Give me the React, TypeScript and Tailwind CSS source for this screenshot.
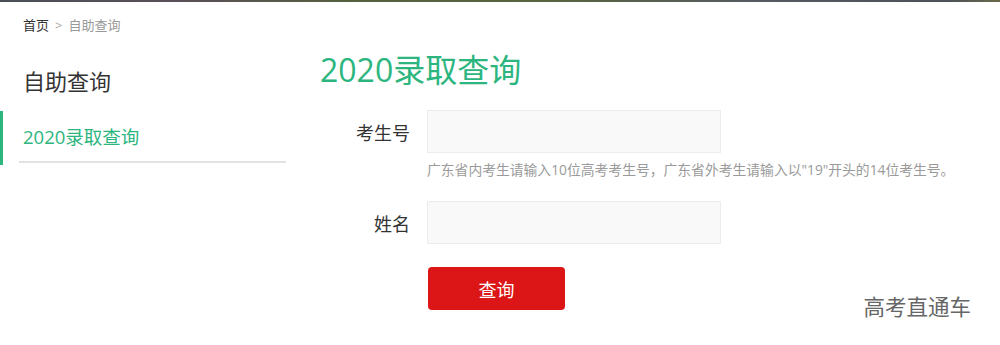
import React from "react";

const font = { fontFamily: '"Open Sans", "Noto Sans CJK SC", sans-serif' };

export default function App() {
  return (
    <div
      className="relative w-[1000px] h-[345px] overflow-hidden bg-white"
      style={font}
    >
      <div className="h-[2px] w-full bg-[linear-gradient(90deg,#4a4f56_0%,#5a5058_18%,#55603f_35%,#5a6440_55%,#555b60_75%,#4d5258_95%,#6a6a48_100%)]" />
      <div className="pt-[13px] pl-[23px] h-[33px] flex items-center text-[13px] leading-[20px]">
        <span className="text-[#333]">首页</span>
        <span className="text-[#aaa] mx-[6px]">&gt;</span>
        <span className="text-[#999]">自助查询</span>
      </div>
      <div className="flex">
        <div className="w-[286px] shrink-0">
          <div className="mt-[31px] pl-[23px] text-[22px] leading-[30px] text-[#333]">
            自助查询
          </div>
          <div className="relative mt-[15px] h-[54px]">
            <div className="absolute left-0 top-0 h-full w-[3px] bg-[#2cb57e]" />
            <div className="ml-[19px] h-[52px] border-b-2 border-[#e2e2e2] pl-[4px] pt-[2px] flex items-center text-[18.5px] text-[#2cb57e]">
              2020录取查询
            </div>
          </div>
        </div>
        <div className="pl-[34px]">
          <div className="mt-[15px] text-[32px] leading-[40px] text-[#2cb57e]">
            2020录取查询
          </div>
          <div className="mt-[20px] flex items-center">
            <div className="w-[90px] pt-[3px] text-right text-[18px] text-[#333]">考生号</div>
            <div className="ml-[17px] w-[294px] h-[43px] bg-[#f9f9f9] border border-[#ececec]" />
          </div>
          <div className="mt-[7px] ml-[107px] text-[13.8px] leading-[20px] text-[#9a9a9a] whitespace-nowrap">
            广东省内考生请输入10位高考考生号，广东省外考生请输入以"19"开头的14位考生号。
          </div>
          <div className="mt-[21px] flex items-center">
            <div className="w-[90px] pt-[3px] text-right text-[18px] text-[#333]">姓名</div>
            <div className="ml-[17px] w-[294px] h-[43px] bg-[#f9f9f9] border border-[#ececec]" />
          </div>
          <div className="mt-[23px] ml-[108px] w-[137px] h-[43px] pt-[3px] rounded-[4px] bg-[#dc1616] flex items-center justify-center text-white text-[18px]">
            查询
          </div>
        </div>
      </div>
      <div className="absolute right-[29px] top-[293px] text-[21.5px] leading-[28px] text-[#666]">
        高考直通车
      </div>
    </div>
  );
}
